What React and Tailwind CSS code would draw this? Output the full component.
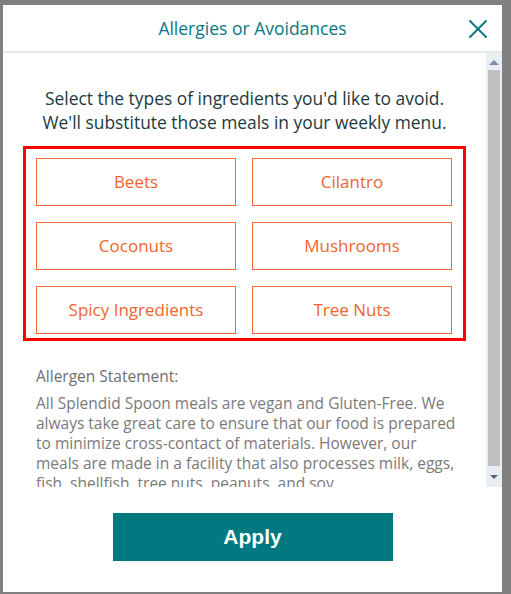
import { X } from 'lucide-react';

const options = ['Beets', 'Cilantro', 'Coconuts', 'Mushrooms', 'Spicy Ingredients', 'Tree Nuts'];

const statement = [
  'All Splendid Spoon meals are vegan and Gluten-Free. We',
  'always take great care to ensure that our food is prepared',
  'to minimize cross-contact of materials. However, our',
  'meals are made in a facility that also processes milk, eggs,',
  'fish, shellfish, tree nuts, peanuts, and soy.',
];

function Scrollbar() {
  return (
    <div className="flex w-[16px] flex-col bg-[#e8eef1] pt-[1px]">
      <div className="flex h-[16px] items-center justify-center">
        <div className="h-0 w-0 border-x-[5px] border-b-[5px] border-x-transparent border-b-[#7f8aa6]" />
      </div>
      <div className="mx-[2px] flex-1 bg-[#c3bec0]" />
      <div className="flex h-[21px] items-center justify-center">
        <div className="h-0 w-0 border-x-[4px] border-t-[4px] border-x-transparent border-t-[#5d6270]" />
      </div>
    </div>
  );
}

export default function App() {
  return (
    <div
      className="relative h-[594px] w-[511px] overflow-hidden bg-[#808080] pl-[3px] pt-[5px]"
      style={{ fontFamily: '"Open Sans", "Liberation Sans", Arial, sans-serif' }}
    >
      <div className="flex h-[587px] w-[499px] flex-col bg-white">
        {/* header */}
        <div className="relative flex h-[48px] items-center justify-center border-b-2 border-[#e6e9e9]">
          <h2 className="text-[17.5px] text-[#0d7780]">Allergies or Avoidances</h2>
          <button className="absolute right-[8px] top-[8px] text-[#0d7780]">
            <X size={32} strokeWidth={1.5} />
          </button>
        </div>

        {/* scrolling body */}
        <div className="flex h-[434px]">
          <div className="flex-1 overflow-hidden px-[20px] pt-[33px]">
            <p className="text-center text-[17.4px] leading-[24px] text-[#203a40]">
              Select the types of ingredients you'd like to avoid.
              <br />
              We'll substitute those meals in your weekly menu.
            </p>

            <div className="mt-[12px] border-[3px] border-[#ff0000] pb-[4px] pl-[10px] pr-[11px] pt-[9px]">
              <div className="grid grid-cols-2 gap-x-[16px] gap-y-[16px]">
                {options.map((o) => (
                  <button
                    key={o}
                    className="flex h-[48px] items-center justify-center border border-[#ef6a35] text-[17px] text-[#f0652f]"
                  >
                    {o}
                  </button>
                ))}
              </div>
            </div>

            <div className="mt-[25px] px-[13px]">
              <h3 className="text-[15.5px] leading-[20px] text-[#6e6e6e]">Allergen Statement:</h3>
              <p className="mt-[7px] text-[15.5px] leading-[20px] text-[#7a7a7a]">
                {statement.map((line) => (
                  <span key={line} className="block whitespace-nowrap">
                    {line}
                  </span>
                ))}
              </p>
            </div>
          </div>
          <Scrollbar />
        </div>

        {/* footer */}
        <div className="flex flex-1 justify-center pt-[26px]">
          <button
            className="h-[48px] w-[280px] bg-[#007a80] text-[21px] font-bold text-white"
            style={{ fontFamily: '"Liberation Sans", Arial, sans-serif' }}
          >
            Apply
          </button>
        </div>
      </div>
    </div>
  );
}
